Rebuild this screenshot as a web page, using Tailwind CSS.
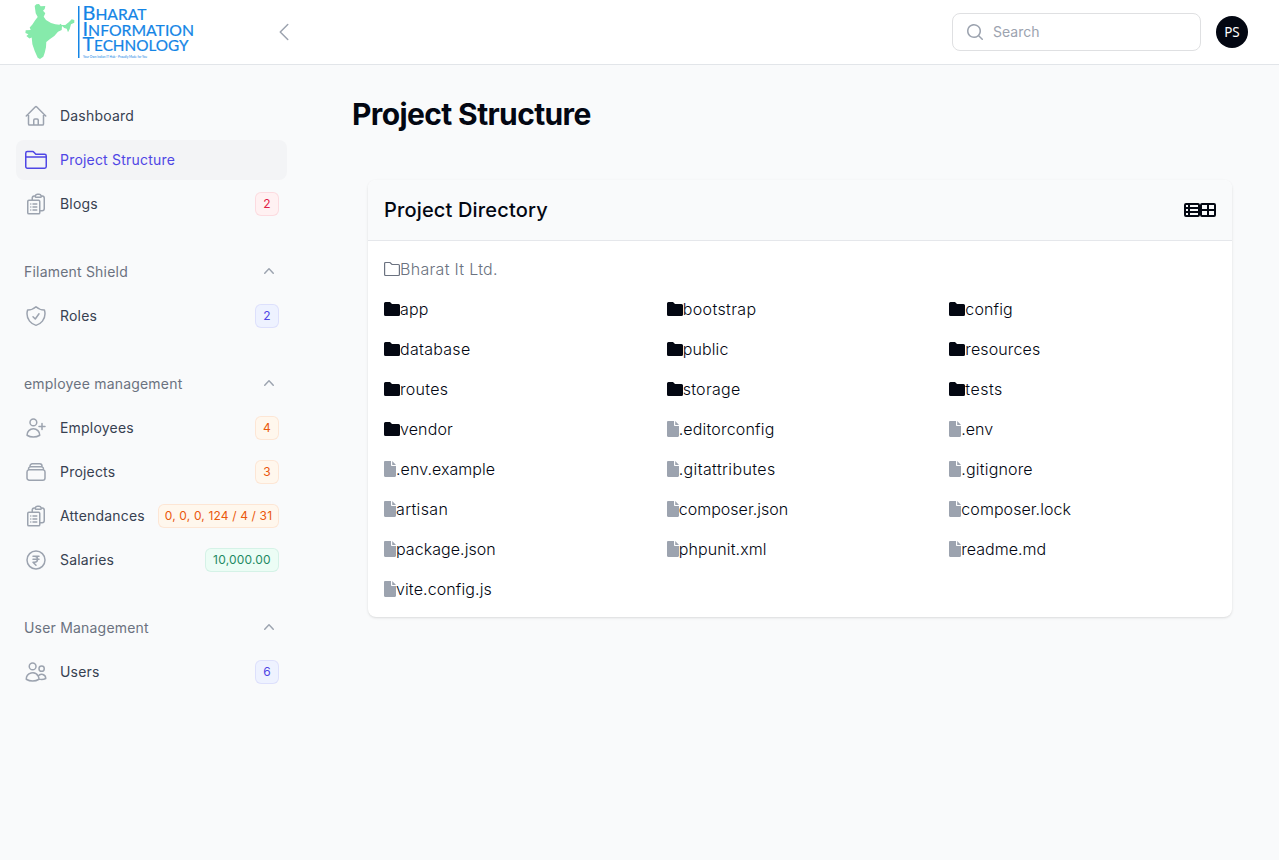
<!DOCTYPE html>
<html lang="en">
<head>
<meta charset="utf-8">
<title>Project Structure</title>
<script src="https://cdn.jsdelivr.net/npm/@tailwindcss/browser@4"></script>
</head>
<body class="h-[860px] overflow-hidden bg-[#f9fafb] font-[Inter,sans-serif] text-[#030712]">
<svg class="hidden">
  <symbol id="home" viewBox="0 0 24 24"><path d="m2.25 12 8.954-8.955c.44-.439 1.152-.439 1.591 0L21.75 12M4.5 9.75v10.125c0 .621.504 1.125 1.125 1.125H9.75v-4.875c0-.621.504-1.125 1.125-1.125h2.25c.621 0 1.125.504 1.125 1.125V21h4.125c.621 0 1.125-.504 1.125-1.125V9.75M8.25 21h8.25"/></symbol>
  <symbol id="nav-folder" viewBox="0 0 24 24"><path d="M1.75 9.1h20.5M1.75 5.2c0-.9.7-1.6 1.6-1.6h5.3c.5 0 1 .2 1.3.6l1.4 1.5c.3.4.8.6 1.3.6h8c.9 0 1.6.7 1.6 1.6v10.7c0 .9-.7 1.6-1.6 1.6H3.350c-.9 0-1.6-.7-1.6-1.6Z"/></symbol>
  <symbol id="clip" viewBox="0 0 24 24"><path d="M9 12h3.75M9 15h3.75M9 18h3.75m3 .75H18a2.25 2.25 0 0 0 2.25-2.25V6.108c0-1.135-.845-2.098-1.976-2.192a48.424 48.424 0 0 0-1.123-.08m-5.801 0c-.065.21-.1.433-.1.664 0 .414.336.75.75.75h4.5a.75.75 0 0 0 .75-.75 2.25 2.25 0 0 0-.1-.664m-5.8 0A2.251 2.251 0 0 1 13.5 2.25H15c1.012 0 1.867.668 2.15 1.586m-5.8 0c-.376.023-.75.05-1.124.08C9.095 4.01 8.25 4.973 8.25 6.108V8.25m0 0H4.875c-.621 0-1.125.504-1.125 1.125v11.25c0 .621.504 1.125 1.125 1.125h9.75c.621 0 1.125-.504 1.125-1.125V9.375c0-.621-.504-1.125-1.125-1.125H8.25ZM6.75 12h.008v.008H6.75V12Zm0 3h.008v.008H6.75V15Zm0 3h.008v.008H6.75V18Z"/></symbol>
  <symbol id="shield" viewBox="0 0 24 24"><path d="M9 12.75 11.25 15 15 9.75m-3-7.036A11.959 11.959 0 0 1 3.598 6 11.99 11.99 0 0 0 3 9.749c0 5.592 3.824 10.29 9 11.623 5.176-1.332 9-6.03 9-11.622 0-1.31-.21-2.571-.598-3.751h-.152c-3.196 0-6.1-1.248-8.25-3.285Z"/></symbol>
  <symbol id="user-plus" viewBox="0 0 24 24"><path d="M18 7.500v3m0 0v3m0-3h3m-3 0h-3m-2.250-4.125a3.375 3.375 0 1 1-6.750 0 3.375 3.375 0 0 1 6.750 0ZM3 19.235v-.11a6.375 6.375 0 0 1 12.750 0v.109A12.318 12.318 0 0 1 9.374 21c-2.331 0-4.512-.645-6.374-1.766Z"/></symbol>
  <symbol id="stack" viewBox="0 0 24 24"><path d="M6 6.878V6a2.250 2.250 0 0 1 2.250-2.250h7.500A2.250 2.250 0 0 1 18 6v.878m-12 0c.235-.083.487-.128.750-.128h10.500c.263 0 .515.045.750.128m-12 0A2.250 2.250 0 0 0 4.500 9v.878m13.500-3A2.250 2.250 0 0 1 19.500 9v.878m0 0a2.246 2.246 0 0 0-.750-.128H5.250c-.263 0-.515.045-.750.128m15 0A2.250 2.250 0 0 1 21 12v6a2.250 2.250 0 0 1-2.250 2.250H5.250A2.250 2.250 0 0 1 3 18v-6c0-.98.626-1.813 1.500-2.122"/></symbol>
  <symbol id="rupee" viewBox="0 0 24 24"><path d="M15 8.250H9m6 3H9m3 6-3-3h1.500a3 3 0 1 0 0-6M21 12a9 9 0 1 1-18 0 9 9 0 0 1 18 0Z"/></symbol>
  <symbol id="users" viewBox="0 0 24 24"><path d="M15 19.128a9.380 9.380 0 0 0 2.625.372 9.337 9.337 0 0 0 4.121-.952 4.125 4.125 0 0 0-7.533-2.493M15 19.128v-.003c0-1.113-.285-2.160-.786-3.070M15 19.128v.106A12.318 12.318 0 0 1 8.624 21c-2.331 0-4.512-.645-6.374-1.766l-.001-.109a6.375 6.375 0 0 1 11.964-3.070M12 6.375a3.375 3.375 0 1 1-6.750 0 3.375 3.375 0 0 1 6.750 0Zm8.250 2.250a2.625 2.625 0 1 1-5.250 0 2.625 2.625 0 0 1 5.250 0Z"/></symbol>
  <symbol id="up" viewBox="0 0 20 20"><path fill-rule="evenodd" d="M14.770 12.790a.750.750 0 0 1-1.060-.020L10 8.832 6.290 12.770a.750.750 0 1 1-1.080-1.040l4.250-4.500a.750.750 0 0 1 1.080 0l4.250 4.500a.750.750 0 0 1-.020 1.060Z"/></symbol>
  <symbol id="folder" viewBox="0 0 16 16"><path d="M0 2.500A1.500 1.500 0 0 1 1.500 1H6l2 2h6.500A1.500 1.500 0 0 1 16 4.500v9a1.500 1.500 0 0 1-1.500 1.500h-13A1.500 1.500 0 0 1 0 13.500Z"/></symbol>
  <symbol id="file" viewBox="0 0 12 16"><path d="M0 1.200C0 .5.500 0 1.200 0H7v4.300c0 .4.300.7.700.7H12v9.800c0 .7-.5 1.200-1.200 1.200H1.200C.5 16 0 15.500 0 14.800ZM8.200 0 12 3.900H8.200Z"/></symbol>
</svg>

<header class="flex h-16 items-center bg-white pr-[31px] pl-6 shadow-[0_1px_0_#e2e5e9]">
  <svg class="h-16 w-[176px] shrink-0" viewBox="24 0 176 64">
    <path fill="#86eaab" d="m34.700 6 1.600-1.700 2.700-.3 1.700 2.300 4.600-.3-.6 3-1.700 1.700 2.300 2.600-1.600 3.400 2.300 3.300 5 3 4.300 1.300 4 .4 1.400-1 1 1.300h3.600l3.700-3 2.700-2.700 2.600.7v2.700l-3.300 1.600-1.300 4.700-1.700 3.300-1.300-3.600-2.400-.7-2.300-2-.3 4-3.700 1.700-3.700 4.300-4.600 3.300-3.400 2.700-.3 5.300-1.300 5.400-1.400 4-3.300 2.300-2.300-1.300-3-6.700-2.300-6.700-.7-6.700-2.300 1-3-2.600 2-1.700-3-1.300.3-2.700 5-.3-1-2.400 2.700-3 2.600-4 2.700-3.600-2-3.700Z"/>
    <path fill="#1485e6" d="M78 6h1.500v52H78Z"/>
    <g fill="#1485e6" font-family="Lato, sans-serif" stroke="#1485e6" stroke-width=".2">
      <text x="82.500" y="20.300" font-size="18.500" textLength="64" lengthAdjust="spacingAndGlyphs">B<tspan font-size="14.500">HARAT</tspan></text>
      <text x="82.500" y="35.700" font-size="18.500" textLength="111.500" lengthAdjust="spacingAndGlyphs">I<tspan font-size="14.500">NFORMATION</tspan></text>
      <text x="82.500" y="50.800" font-size="18.500" textLength="106" lengthAdjust="spacingAndGlyphs">T<tspan font-size="14.500">ECHNOLOGY</tspan></text>
    </g>
    <text x="83" y="57.500" fill="#1485e6" font-family="Lato, sans-serif" font-size="3.200" textLength="64" lengthAdjust="spacingAndGlyphs">Your Own Indian IT Hub - Proudly Made for You</text>
  </svg>
  <svg class="ml-[72px] size-6" viewBox="0 0 24 24" fill="none" stroke="#9ca3af" stroke-width="1.500" stroke-linecap="round" stroke-linejoin="round"><path d="M15.750 19.500 8.250 12l7.500-7.500"/></svg>
  <div class="ml-auto flex h-[38px] w-[249px] items-center gap-2 rounded-lg border border-[#dfe0e2] bg-white px-3">
    <svg class="size-5" viewBox="0 0 20 20" fill="#9ca3af"><path fill-rule="evenodd" d="M9 3.500a5.500 5.500 0 1 0 0 11 5.500 5.500 0 0 0 0-11ZM2 9a7 7 0 1 1 12.452 4.391l3.328 3.329a.750.750 0 1 1-1.060 1.060l-3.329-3.328A7 7 0 0 1 2 9Z"/></svg>
    <span class="text-sm text-[#9ca3af]">Search</span>
  </div>
  <div class="ml-[15px] flex size-8 items-center justify-center rounded-full bg-[#030712] font-['Noto_Sans',sans-serif] text-[13.500px] text-white">PS</div>
</header>

<div class="flex">
  <aside class="w-80 shrink-0 pt-8 pr-[41px] pl-6 text-sm font-normal tracking-[0.2px] text-[#374151]">
    <nav class="flex flex-col gap-7">
      <div class="-mx-2 flex flex-col gap-1">
        <a class="flex h-10 items-center gap-3 px-2"><svg class="size-6 fill-none stroke-[#9ca3af] stroke-[1.5]" stroke-linecap="round" stroke-linejoin="round"><use href="#home"/></svg>Dashboard</a>
        <a class="flex h-10 items-center gap-3 rounded-lg bg-[#f3f4f6] px-2 text-[#4f46e5]"><svg class="size-6 fill-none stroke-[#4f46e5] stroke-[1.5]" stroke-linecap="round" stroke-linejoin="round"><use href="#nav-folder"/></svg>Project Structure</a>
        <a class="flex h-10 items-center gap-3 px-2"><svg class="size-6 fill-none stroke-[#9ca3af] stroke-[1.5]" stroke-linecap="round" stroke-linejoin="round"><use href="#clip"/></svg><span class="flex-1">Blogs</span><span class="flex h-6 min-w-6 items-center justify-center rounded-md bg-[#fff1f2] px-2 text-xs text-[#e11d48] ring-1 ring-[#e11d48]/10 ring-inset">2</span></a>
      </div>
      <div class="-mx-2 flex flex-col gap-1">
        <div class="flex h-10 items-center justify-between px-2 text-[#6b7280]">Filament Shield<svg class="mb-0.5 size-5 fill-[#9ca3af]"><use href="#up"/></svg></div>
        <a class="flex h-10 items-center gap-3 px-2"><svg class="size-6 fill-none stroke-[#9ca3af] stroke-[1.5]" stroke-linecap="round" stroke-linejoin="round"><use href="#shield"/></svg><span class="flex-1">Roles</span><span class="flex h-6 min-w-6 items-center justify-center rounded-md bg-[#eef2ff] px-2 text-xs text-[#4f46e5] ring-1 ring-[#4f46e5]/10 ring-inset">2</span></a>
      </div>
      <div class="-mx-2 flex flex-col gap-1">
        <div class="flex h-10 items-center justify-between px-2 text-[#6b7280]">employee management<svg class="mb-0.5 size-5 fill-[#9ca3af]"><use href="#up"/></svg></div>
        <a class="flex h-10 items-center gap-3 px-2"><svg class="size-6 fill-none stroke-[#9ca3af] stroke-[1.5]" stroke-linecap="round" stroke-linejoin="round"><use href="#user-plus"/></svg><span class="flex-1">Employees</span><span class="flex h-6 min-w-6 items-center justify-center rounded-md bg-[#fff7ed] px-2 text-xs text-[#ea580c] ring-1 ring-[#ea580c]/10 ring-inset">4</span></a>
        <a class="flex h-10 items-center gap-3 px-2"><svg class="size-6 fill-none stroke-[#9ca3af] stroke-[1.5]" stroke-linecap="round" stroke-linejoin="round"><use href="#stack"/></svg><span class="flex-1">Projects</span><span class="flex h-6 min-w-6 items-center justify-center rounded-md bg-[#fff7ed] px-2 text-xs text-[#ea580c] ring-1 ring-[#ea580c]/10 ring-inset">3</span></a>
        <a class="flex h-10 items-center gap-3 px-2"><svg class="size-6 shrink-0 fill-none stroke-[#9ca3af] stroke-[1.5]" stroke-linecap="round" stroke-linejoin="round"><use href="#clip"/></svg><span class="flex-1">Attendances</span><span class="flex h-6 w-[121px] items-center justify-center rounded-md bg-[#fff7ed] text-xs tracking-[0.15px] whitespace-nowrap text-[#ea580c] ring-1 ring-[#ea580c]/10 ring-inset">0, 0, 0, 124 / 4 / 31</span></a>
        <a class="flex h-10 items-center gap-3 px-2"><svg class="size-6 fill-none stroke-[#9ca3af] stroke-[1.5]" stroke-linecap="round" stroke-linejoin="round"><use href="#rupee"/></svg><span class="flex-1">Salaries</span><span class="flex h-6 w-[74px] items-center justify-center rounded-md bg-[#ecfdf5] text-xs text-[#1f8a63] ring-1 ring-[#059669]/10 ring-inset">10,000.00</span></a>
      </div>
      <div class="-mx-2 flex flex-col gap-1">
        <div class="flex h-10 items-center justify-between px-2 text-[#6b7280]">User Management<svg class="mb-0.5 size-5 fill-[#9ca3af]"><use href="#up"/></svg></div>
        <a class="flex h-10 items-center gap-3 px-2"><svg class="size-6 fill-none stroke-[#9ca3af] stroke-[1.5]" stroke-linecap="round" stroke-linejoin="round"><use href="#users"/></svg><span class="flex-1">Users</span><span class="flex h-6 min-w-6 items-center justify-center rounded-md bg-[#eef2ff] px-2 text-xs text-[#4f46e5] ring-1 ring-[#4f46e5]/10 ring-inset">6</span></a>
      </div>
    </nav>
  </aside>

  <main class="flex-1 pt-8 pr-[31px] pl-8">
    <h1 class="text-3xl leading-9 font-bold tracking-[-0.62px]">Project Structure</h1>
    <section class="mx-4 mt-12 overflow-hidden rounded-lg bg-white shadow-sm">
      <div class="flex h-[61px] items-center justify-between border-b border-[#e5e7eb] bg-[#f9fafb] px-4">
        <h2 class="text-xl font-medium tracking-[0.16px]">Project Directory</h2>
        <div class="flex">
          <svg class="size-4" viewBox="0 0 16 16" fill="none" stroke="#030712" stroke-width="2"><rect x="1" y="2" width="14" height="12" rx="1"/><path d="M5 2v12M1 6h14M1 10h14"/></svg>
          <svg class="size-4" viewBox="0 0 16 16" fill="none" stroke="#030712" stroke-width="2"><rect x="1" y="2" width="14" height="12" rx="1"/><path d="M8 2v12M1 8h14"/></svg>
        </div>
      </div>
      <div class="p-4 font-light tracking-[0.12px]">
        <div class="flex h-6 items-center tracking-[0.3px] text-[#6b7280]"><svg class="size-4" viewBox="0 0 16 16" fill="none" stroke="#6b7280" stroke-width="1.200"><path d="M.6 2.500a1 1 0 0 1 1-1H6l2 2h6.400a1 1 0 0 1 1 1v9a1 1 0 0 1-1 1h-12.800a1 1 0 0 1-1-1Z"/></svg>Bharat It Ltd.</div>
        <div class="mt-4 grid grid-cols-3 gap-4">
          <div class="flex h-6 items-center"><svg class="size-4 fill-[#030712]"><use href="#folder"/></svg>app</div>
          <div class="flex h-6 items-center tracking-[0.38px]"><svg class="size-4 fill-[#030712]"><use href="#folder"/></svg>bootstrap</div>
          <div class="flex h-6 items-center"><svg class="size-4 fill-[#030712]"><use href="#folder"/></svg>config</div>
          <div class="flex h-6 items-center tracking-[0.28px]"><svg class="size-4 fill-[#030712]"><use href="#folder"/></svg>database</div>
          <div class="flex h-6 items-center"><svg class="size-4 fill-[#030712]"><use href="#folder"/></svg>public</div>
          <div class="flex h-6 items-center"><svg class="size-4 fill-[#030712]"><use href="#folder"/></svg>resources</div>
          <div class="flex h-6 items-center tracking-[0.28px]"><svg class="size-4 fill-[#030712]"><use href="#folder"/></svg>routes</div>
          <div class="flex h-6 items-center tracking-[0.28px]"><svg class="size-4 fill-[#030712]"><use href="#folder"/></svg>storage</div>
          <div class="flex h-6 items-center tracking-[0.5px]"><svg class="size-4 fill-[#030712]"><use href="#folder"/></svg>tests</div>
          <div class="flex h-6 items-center"><svg class="size-4 fill-[#030712]"><use href="#folder"/></svg>vendor</div>
          <div class="flex h-6 items-center tracking-[0.18px]"><svg class="h-4 w-3 fill-[#9ca3af]"><use href="#file"/></svg>.editorconfig</div>
          <div class="flex h-6 items-center tracking-normal"><svg class="h-4 w-3 fill-[#9ca3af]"><use href="#file"/></svg>.env</div>
          <div class="flex h-6 items-center tracking-[0.06px]"><svg class="h-4 w-3 fill-[#9ca3af]"><use href="#file"/></svg>.env.example</div>
          <div class="flex h-6 items-center tracking-[0.38px]"><svg class="h-4 w-3 fill-[#9ca3af]"><use href="#file"/></svg>.gitattributes</div>
          <div class="flex h-6 items-center tracking-[0.18px]"><svg class="h-4 w-3 fill-[#9ca3af]"><use href="#file"/></svg>.gitignore</div>
          <div class="flex h-6 items-center tracking-[0.34px]"><svg class="h-4 w-3 fill-[#9ca3af]"><use href="#file"/></svg>artisan</div>
          <div class="flex h-6 items-center tracking-[0.03px]"><svg class="h-4 w-3 fill-[#9ca3af]"><use href="#file"/></svg>composer.json</div>
          <div class="flex h-6 items-center tracking-[0.06px]"><svg class="h-4 w-3 fill-[#9ca3af]"><use href="#file"/></svg>composer.lock</div>
          <div class="flex h-6 items-center tracking-[0.06px]"><svg class="h-4 w-3 fill-[#9ca3af]"><use href="#file"/></svg>package.json</div>
          <div class="flex h-6 items-center tracking-[0.12px]"><svg class="h-4 w-3 fill-[#9ca3af]"><use href="#file"/></svg>phpunit.xml</div>
          <div class="flex h-6 items-center tracking-normal"><svg class="h-4 w-3 fill-[#9ca3af]"><use href="#file"/></svg>readme.md</div>
          <div class="flex h-6 items-center"><svg class="h-4 w-3 fill-[#9ca3af]"><use href="#file"/></svg>vite.config.js</div>
        </div>
      </div>
    </section>
  </main>
</div>
</body>
</html>
